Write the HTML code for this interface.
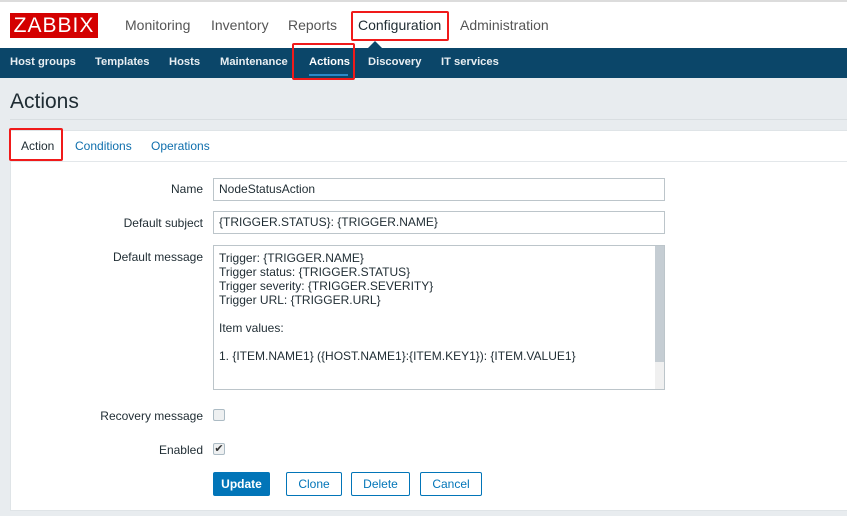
<!DOCTYPE html>
<html><head><meta charset="utf-8"><style>
*{box-sizing:border-box;margin:0;padding:0}
body{width:847px;height:516px;overflow:hidden;background:#e8ecef;font-family:"Liberation Sans",Arial,sans-serif;position:relative;color:#1f2c33}
.a{position:absolute;white-space:nowrap}
.top{left:0;top:0;width:847px;height:48px;background:#fff;border-top:2px solid #dcdcdc}
.logo{left:10px;top:13px;width:88px;height:25px;background:#d40000;color:#fff;font-size:21px;line-height:25px;text-align:center;letter-spacing:1px}
.mm{top:17px;font-size:14px;color:#555}
.nav{left:0;top:48px;width:847px;height:30px;background:#0b4669}
.sm{top:56px;font-size:11.2px;font-weight:bold;color:#e8eef2}
.red{position:absolute;border:2px solid #f01a1a;border-radius:2px}
.lbl{font-size:12px;color:#1f2c33;text-align:right;right:644px}
.inp{position:absolute;left:213px;width:452px;border:1px solid #bcc5ca;background:#fff;font-size:12px;padding-left:5px;color:#1f2c33}
.btn{position:absolute;top:472px;height:24px;border:1px solid #0275b8;color:#0275b8;font-size:12px;text-align:center;line-height:22px;border-radius:2px;background:#fff}
.cb{position:absolute;left:213px;width:12px;height:12px;border:1px solid #acbbc4;border-radius:2px;background:#eef0f1}
</style></head><body>
<div class="a top"></div>
<div class="a logo">ZABBIX</div>
<div class="a mm" style="left:125px">Monitoring</div>
<div class="a mm" style="left:211px">Inventory</div>
<div class="a mm" style="left:288px">Reports</div>
<div class="a mm" style="left:358px;color:#1f2c33">Configuration</div>
<div class="a mm" style="left:460px">Administration</div>
<div class="red" style="left:351px;top:11px;width:98px;height:30px"></div>
<div class="a" style="left:368px;top:41px;width:0;height:0;border-left:7px solid transparent;border-right:7px solid transparent;border-bottom:7px solid #0b4669"></div>
<div class="a nav"></div>
<div class="a sm" style="left:10px">Host groups</div>
<div class="a sm" style="left:95px">Templates</div>
<div class="a sm" style="left:169px">Hosts</div>
<div class="a sm" style="left:220px">Maintenance</div>
<div class="a sm" style="left:309px;color:#fff">Actions</div>
<div class="a" style="left:309px;top:74px;width:39px;height:2px;background:#2c89c8"></div>
<div class="a sm" style="left:368px">Discovery</div>
<div class="a sm" style="left:441px">IT services</div>
<div class="red" style="left:292px;top:43px;width:63px;height:37px"></div>
<div class="a" style="left:10px;top:90px;font-size:21px;color:#1f2c33">Actions</div>
<div class="a" style="left:10px;top:119px;width:837px;height:1px;background:#d9dee1"></div>
<div class="a" style="left:10px;top:130px;width:837px;height:381px;background:#fff;border:1px solid #dfe4e7;border-right:none"></div>
<div class="a" style="left:11px;top:161px;width:836px;height:1px;background:#e3e7ea"></div>
<div class="a" style="left:21px;top:139px;font-size:12px;color:#1f2c33">Action</div>
<div class="a" style="left:75px;top:139px;font-size:12px;color:#0f6fad">Conditions</div>
<div class="a" style="left:151px;top:139px;font-size:12px;color:#0f6fad">Operations</div>
<div class="red" style="left:9px;top:128px;width:54px;height:33px"></div>
<div class="a lbl" style="top:182px">Name</div>
<div class="inp" style="top:178px;height:23px;line-height:21px">NodeStatusAction</div>
<div class="a lbl" style="top:216px">Default subject</div>
<div class="inp" style="top:211px;height:23px;line-height:21px">{TRIGGER.STATUS}: {TRIGGER.NAME}</div>
<div class="a lbl" style="top:250px">Default message</div>
<div class="inp" style="top:245px;height:145px;padding-top:5px;line-height:14px;white-space:pre">Trigger: {TRIGGER.NAME}
Trigger status: {TRIGGER.STATUS}
Trigger severity: {TRIGGER.SEVERITY}
Trigger URL: {TRIGGER.URL}

Item values:

1. {ITEM.NAME1} ({HOST.NAME1}:{ITEM.KEY1}): {ITEM.VALUE1}</div>
<div class="a" style="left:655px;top:246px;width:9px;height:116px;background:#c5cdd3"></div>
<div class="a" style="left:655px;top:362px;width:9px;height:27px;background:#f0f0f0"></div>
<div class="a lbl" style="top:409px">Recovery message</div>
<div class="cb" style="top:409px"></div>
<div class="a lbl" style="top:443px">Enabled</div>
<div class="cb" style="top:443px;font-size:11px;line-height:10px;text-align:center;color:#333">✔</div>
<div class="btn" style="left:213px;width:57px;background:#0275b8;color:#fff;font-weight:bold">Update</div>
<div class="btn" style="left:286px;width:56px">Clone</div>
<div class="btn" style="left:351px;width:59px">Delete</div>
<div class="btn" style="left:420px;width:62px">Cancel</div>
</body></html>
